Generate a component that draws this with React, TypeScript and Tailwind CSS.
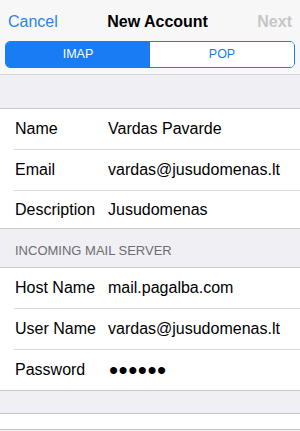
const font = { fontFamily: '"Liberation Sans", Arial, sans-serif' };

type Field = { label: string; value: string; h: string; secret?: boolean };

const account: Field[] = [
  { label: "Name", value: "Vardas Pavarde", h: "h-[40px]" },
  { label: "Email", value: "vardas@jusudomenas.lt", h: "h-[40px]" },
  { label: "Description", value: "Jusudomenas", h: "h-[37px]" },
];

const incoming: Field[] = [
  { label: "Host Name", value: "mail.pagalba.com", h: "h-[40px]" },
  { label: "User Name", value: "vardas@jusudomenas.lt", h: "h-[40px]" },
  { label: "Password", value: "••••••", h: "h-[40px]", secret: true },
];

function Group({ rows }: { rows: Field[] }) {
  return (
    <div className="border-y border-[#c8c7cc] bg-white">
      {rows.map((r, i) => (
        <div key={r.label}>
          {i > 0 && <div className="ml-[14px] h-px bg-[#d9d8dc]" />}
          <div className={`flex items-center ${r.h} pl-[15px] text-[16px] text-black`}>
            <span className="w-[93px] shrink-0">{r.label}</span>
            {r.secret ? (
              <span className="ml-[1px] text-[26px] leading-none tracking-[0.5px]">{r.value}</span>
            ) : (
              <span>{r.value}</span>
            )}
          </div>
        </div>
      ))}
    </div>
  );
}

export default function App() {
  return (
    <div className="h-[431px] w-[300px] overflow-hidden bg-[#efeff4]" style={font}>
      <div className="border-b border-[#d6d6da] bg-[#f7f7f8]">
        <div className="flex h-[40px] items-center justify-between px-[8px] pt-[3px] text-[16px]">
          <span className="text-[#2a84ea]">Cancel</span>
          <span className="font-bold text-black">New Account</span>
          <span className="font-bold text-[#c6c6c8]">Next</span>
        </div>
        <div className="px-[5px] pb-[6px] pt-[1px]">
          <div className="flex h-[27px] overflow-hidden rounded-[5px] border border-[#1a7cf5] text-[12.5px]">
            <div className="flex flex-1 items-center justify-center bg-[#1a7cf5] text-white">IMAP</div>
            <div className="flex flex-1 items-center justify-center bg-white text-[#1a7cf5]">POP</div>
          </div>
        </div>
      </div>

      <div className="h-[33px]" />
      <Group rows={account} />

      <div className="flex h-[38px] items-end pb-[7px] pl-[15px] text-[13px] text-[#6d6d72]">
        INCOMING MAIL SERVER
      </div>
      <Group rows={incoming} />

      <div className="h-[22px]" />
      <div className="h-[17px] border-y border-[#c8c7cc] bg-white" />
    </div>
  );
}
